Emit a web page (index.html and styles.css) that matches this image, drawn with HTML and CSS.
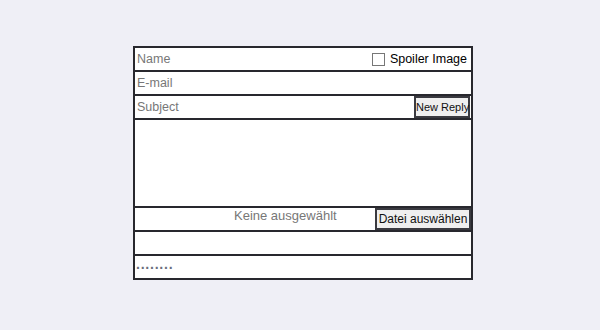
FILE: index.html
```html
<!DOCTYPE html>
<html lang="de">
<head>
    <meta charset="UTF-8">
    <meta name="viewport" content="width=device-width, initial-scale=1.0">
    <title>Post</title>
    <link rel="stylesheet" href="styles.css">
</head>
<body>
    <form class="post-form">
        <div class="row">
            <input class="field" type="text" placeholder="Name">
            <label class="spoiler"><span class="check"></span>Spoiler Image</label>
        </div>
        <div class="row">
            <input class="field" type="text" placeholder="E-mail">
        </div>
        <div class="row">
            <input class="field" type="text" placeholder="Subject">
            <button type="button" class="btn btn-reply">New Reply</button>
        </div>
        <div class="row row-body"></div>
        <div class="row">
            <span class="file-name">Keine ausgewählt</span>
            <button type="button" class="btn btn-file">Datei auswählen</button>
        </div>
        <div class="row"></div>
        <div class="row">
            <span class="password">········</span>
        </div>
    </form>
</body>
</html>
```

FILE: styles.css
```css
/* Основные стили */
body {
    margin: 0;
    padding: 0;
    background: #efeff6;
    font-family: 'Liberation Sans', Arial, sans-serif;
}

.post-form {
    width: 336px;
    margin: 46px 0 0 133px;
    border: 2px solid #28282e;
    background: white;
}

.row {
    display: flex;
    align-items: stretch;
    height: 22px;
    border-bottom: 2px solid #28282e;
}

.row:last-child {
    border-bottom: none;
}

.row-body {
    height: 86px;
}

.field {
    flex: 1;
    min-width: 0;
    border: none;
    outline: none;
    padding: 0 0 0 2px;
    margin: 0;
    font-family: inherit;
    font-size: 12.5px;
    background: transparent;
}

.field::placeholder {
    color: #777;
}

.spoiler {
    display: flex;
    align-items: center;
    font-size: 12.5px;
    color: #000;
    padding-right: 4px;
}

.check {
    width: 11px;
    height: 11px;
    border: 1px solid #777;
    margin-right: 5px;
}

.btn {
    box-sizing: border-box;
    height: 22px;
    margin: 0 1px 0 0;
    padding: 0;
    border: 2px solid #3a3a40;
    background: #efefef;
    font-family: inherit;
    color: #111;
    white-space: nowrap;
}

.btn-reply {
    width: 56px;
    font-size: 11px;
}

.btn-file {
    width: 96px;
    margin-right: 0;
    font-size: 12px;
}

.file-name {
    flex: 1;
    padding-left: 99px;
    font-size: 13px;
    line-height: 16px;
    color: #777;
}

.password {
    padding-left: 1px;
    font-size: 14px;
    line-height: 24px;
    color: #6a6e7c;
    font-weight: bold;
}
```
